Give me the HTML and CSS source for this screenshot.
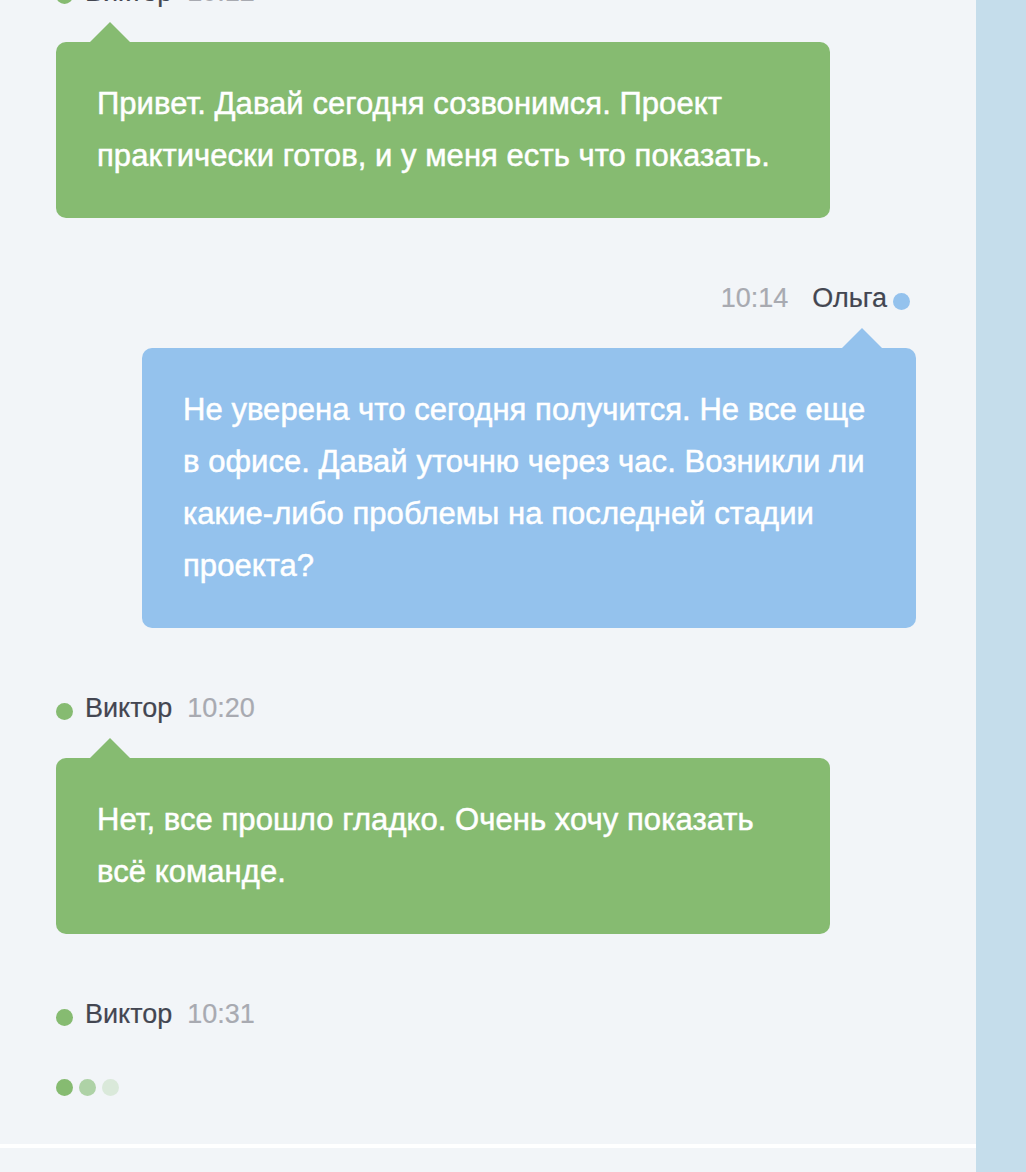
FILE: index.html
```html
<!DOCTYPE html>
<html lang="ru">
<head>
<meta charset="utf-8">
<title>Chat</title>
<link rel="stylesheet" href="styles.css">
</head>
<body>
<div class="app">
  <section class="chat">
    <div class="chat-history">
      <ul class="history-list">
        <li class="item">
          <div class="meta">
            <span class="dot dot-online"></span>
            <span class="name">Виктор</span>
            <span class="time">10:12</span>
          </div>
          <div class="message my-message">Привет. Давай сегодня созвонимся. Проект практически готов, и у меня есть что показать.</div>
        </li>
        <li class="item">
          <div class="meta meta-right">
            <span class="time">10:14</span>
            <span class="name">Ольга</span>
            <span class="dot dot-me"></span>
          </div>
          <div class="message other-message">Не уверена что сегодня получится. Не все еще в офисе. Давай уточню через час. Возникли ли какие-либо проблемы на последней стадии проекта?</div>
        </li>
        <li class="item">
          <div class="meta">
            <span class="dot dot-online"></span>
            <span class="name">Виктор</span>
            <span class="time">10:20</span>
          </div>
          <div class="message my-message">Нет, все прошло гладко. Очень хочу показать всё команде.</div>
        </li>
        <li class="item">
          <div class="meta">
            <span class="dot dot-online"></span>
            <span class="name">Виктор</span>
            <span class="time">10:31</span>
          </div>
          <div class="typing">
            <span class="dot dot-online"></span>
            <span class="dot dot-mid"></span>
            <span class="dot dot-light"></span>
          </div>
        </li>
      </ul>
    </div>
    <div class="chat-message"></div>
  </section>
  <aside class="side"></aside>
</div>
</body>
</html>
```

FILE: styles.css
```css
* { box-sizing: border-box; }
html, body { margin: 0; padding: 0; }
body {
  font-family: "Liberation Sans", Arial, sans-serif;
  background: #c5ddeb;
  overflow: hidden;
}
.app {
  display: flex;
  height: 1172px;
  overflow: hidden;
}
.chat {
  width: 976px;
  flex: 0 0 976px;
  background: #f2f5f8;
  display: flex;
  flex-direction: column;
}
.side {
  flex: 1;
  background: #c5ddeb;
}
.chat-history {
  padding: 0 60px 34px 56px;
  border-bottom: 4px solid #ffffff;
}
.history-list {
  list-style: none;
  margin: -28px 0 0 0;
  padding: 0;
  display: flex;
  flex-direction: column;
}
.item {
  display: flex;
  flex-direction: column;
}
.meta {
  height: 40px;
  display: flex;
  align-items: center;
  margin-bottom: 30px;
  font-size: 27px;
  -webkit-text-stroke: 0.2px currentColor;
}
.meta-right { justify-content: flex-end; padding-right: 6px; }
.name { color: #434651; }
.time { color: #a8aab1; }
.meta .dot { margin-top: 6px; }
.meta .dot + .name { margin-left: 12px; }
.meta .name + .time { margin-left: 15px; }
.meta .time + .name { margin-left: 24px; }
.meta .name + .dot { margin-left: 6px; }
.dot {
  width: 17px;
  height: 17px;
  border-radius: 50%;
  display: inline-block;
  flex: 0 0 auto;
}
.dot-online { background: #86bb71; }
.dot-me { background: #94c2ed; }
.dot-mid { background: #aed2a6; }
.dot-light { background: #dae9da; }
.message {
  position: relative;
  width: 90%;
  color: #ffffff;
  font-size: 31px;
  letter-spacing: 0.05px;
  -webkit-text-stroke: 0.5px #ffffff;
  line-height: 52px;
  padding: 36px 41px;
  border-radius: 10px;
  margin-bottom: 60px;
}
.message::after {
  content: "";
  position: absolute;
  bottom: 100%;
  width: 0;
  height: 0;
  border: 20px solid transparent;
  margin-left: -20px;
}
.my-message { background: #86bb71; }
.my-message::after { left: 7%; border-bottom-color: #86bb71; }
.other-message { background: #94c2ed; align-self: flex-end; }
.other-message::after { left: 93%; border-bottom-color: #94c2ed; }
.typing {
  height: 46px;
  display: flex;
  align-items: center;
  gap: 6px;
}
.chat-message {
  flex: 1;
  background: #f2f5f8;
}
```
